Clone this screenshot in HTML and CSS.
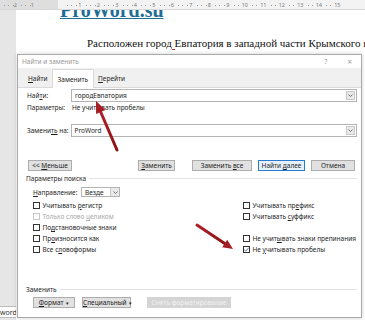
FILE: index.html
```html
<!DOCTYPE html>
<html>

<head>
    <title>Найти и заменить</title>
    <link rel="stylesheet" href="styles.css">
</head>

<body>
    <div class="ruler">
        <div class="ruler-margin">
            <span class="tick"><b>2</b></span><span class="tick"><b>1</b></span>
        </div>
        <div class="ruler-text">
            <span class="tick"><b>1</b></span><span class="tick"><b>2</b></span><span class="tick"><b>3</b></span><span class="tick"><b>4</b></span><span class="tick"><b>5</b></span><span class="tick"><b>6</b></span><span class="tick"><b>7</b></span><span class="tick"><b>8</b></span><span class="tick"><b>9</b></span><span class="tick"><b>10</b></span><span class="tick"><b>11</b></span><span class="tick"><b>12</b></span><span class="tick"><b>13</b></span><span class="tick"><b>14</b></span><span class="tick"><b>15</b></span>
        </div>
    </div>

    <div class="doc">
        <div class="gutter">
            <div class="hint">word</div>
        </div>
        <div class="page">
            <div class="site">ProWord.su</div>
            <p class="line">Расположен город<span class="mark"> </span>Евпатория в западной части Крымского полуострова</p>
        </div>
    </div>

    <div class="dialog">
        <div class="titlebar">
            <span class="title">Найти и заменить</span>
            <span class="help">?</span>
            <span class="close">×</span>
        </div>
        <div class="tabs">
            <span class="tab"><u>Н</u>айти</span>
            <span class="tab active">Заменить</span>
            <span class="tab"><u>П</u>ерейти</span>
        </div>
        <div class="panel">
            <div class="field">
                <span class="label">Най<u>т</u>и:</span>
                <div class="combo">
                    <span class="value">городЕвпатория</span>
                    <span class="drop"><svg width="5" height="3" viewBox="0 0 5 3"><path d="M0.5 0.5 L2.5 2.5 L4.5 0.5" fill="none" stroke="#555" stroke-width="0.8"/></svg></span>
                </div>
            </div>
            <div class="params">
                <span class="label">Параметры:</span>
                <span>Не учитывать пробелы</span>
            </div>
            <div class="field replace">
                <span class="label">Замени<u>ть</u> на:</span>
                <div class="combo">
                    <span class="value">ProWord</span>
                    <span class="drop"><svg width="5" height="3" viewBox="0 0 5 3"><path d="M0.5 0.5 L2.5 2.5 L4.5 0.5" fill="none" stroke="#555" stroke-width="0.8"/></svg></span>
                </div>
            </div>

            <div class="buttons">
                <span class="btn btn-less">&lt;&lt; <u>М</u>еньше</span>
                <span class="btn btn-replace"><u>З</u>аменить</span>
                <span class="btn btn-all">Заменить <u>в</u>се</span>
                <span class="btn btn-next">Найти <u>д</u>алее</span>
                <span class="btn btn-cancel">Отмена</span>
            </div>

            <div class="group">Параметры поиска</div>
            <div class="direction">
                <span class="label"><u>Н</u>аправление:</span>
                <span class="select">
                    <span class="value">Везде</span>
                    <span class="drop"><svg width="5" height="3" viewBox="0 0 5 3"><path d="M0.5 0.5 L2.5 2.5 L4.5 0.5" fill="none" stroke="#555" stroke-width="0.8"/></svg></span>
                </span>
            </div>

            <div class="checks">
                <label class="check"><i class="box"></i><span>Учитывать <u>р</u>егистр</span></label>
                <label class="check"><i class="box"></i><span>Учитывать пр<u>е</u>фикс</span></label>
                <label class="check disabled"><i class="box"></i><span>Только слово <u>ц</u>еликом</span></label>
                <label class="check"><i class="box"></i><span>Учитывать <u>с</u>уффикс</span></label>
                <label class="check"><i class="box"></i><span>По<u>д</u>становочные знаки</span></label>
                <span></span>
                <label class="check"><i class="box"></i><span>Пр<u>о</u>износится как</span></label>
                <label class="check"><i class="box"></i><span>Не учит<u>ы</u>вать знаки препинания</span></label>
                <label class="check"><i class="box"></i><span>Все с<u>л</u>овоформы</span></label>
                <label class="check"><i class="box"><svg width="7" height="7" viewBox="0 0 7 7"><path d="M1.2 3.6 L2.8 5.1 L5.8 1.6" fill="none" stroke="#3d6fa3" stroke-width="0.9"/></svg></i><span>Не <u>у</u>читывать пробелы</span></label>
            </div>

            <div class="group group-replace">Заменить</div>
            <div class="buttons buttons-format">
                <span class="btn btn-format"><u>Ф</u>ормат <span class="caret">▾</span></span>
                <span class="btn btn-special"><u>С</u>пециальный <span class="caret">▾</span></span>
                <span class="btn btn-clear">Снять форматирование</span>
            </div>
        </div>
    </div>

    <svg class="arrows" width="365" height="320" viewBox="0 0 365 320">
        <defs>
            <linearGradient id="red" x1="0" y1="0" x2="1" y2="1">
                <stop offset="0" stop-color="#b0202a"/>
                <stop offset="1" stop-color="#8a1414"/>
            </linearGradient>
        </defs>
        <line x1="117" y1="150" x2="100.7" y2="112" stroke="url(#red)" stroke-width="3" stroke-linecap="round"/>
        <polygon points="96,101 105.3,110.1 96.1,114" fill="#a51c22"/>
        <line x1="197" y1="225" x2="224.7" y2="243.5" stroke="url(#red)" stroke-width="3" stroke-linecap="round"/>
        <polygon points="233,249 222.2,247.2 227.2,239.8" fill="#a51c22"/>
    </svg>
</body>

</html>
```

FILE: styles.css
```css
* {
    margin: 0;
    padding: 0;
    box-sizing: border-box;
}

body {
    width: 365px;
    height: 320px;
    overflow: hidden;
    position: relative;
    background: #e6e6e6;
    font-family: "Noto Sans", "Liberation Sans", sans-serif;
    font-size: 6.5px;
    color: #1e1e1e;
}

u {
    text-decoration-thickness: 0.5px;
    text-underline-offset: 1px;
}

/* ruler */
.ruler {
    height: 10px;
    display: flex;
    background: #f3f3f3;
    border-bottom: 1px solid #d8d8d8;
    font-size: 5.5px;
    line-height: 10px;
    color: #7a7a7a;
}

.ruler-margin {
    width: 58px;
    display: flex;
    background: #dedede;
}

.ruler-text {
    flex: 1;
    display: flex;
    padding-left: 5px;
}

.tick {
    flex: none;
    width: 18.5px;
    text-align: right;
    background-image: repeating-linear-gradient(90deg, transparent 0 3.6px, #9c9c9c 3.6px 4.6px);
    background-size: 100% 1px;
    background-position: 0 5px;
    background-repeat: no-repeat;
}

.ruler-margin .tick {
    width: 17px;
}

.tick b {
    font-weight: normal;
    background: #f3f3f3;
}

.ruler-margin .tick b {
    background: #dedede;
}

/* document */
.doc {
    height: 310px;
    display: flex;
    overflow: hidden;
}

.gutter {
    width: 16px;
    display: flex;
    flex-direction: column;
}

.hint {
    margin-top: auto;
    margin-bottom: 2px;
    width: 18px;
    height: 12px;
    line-height: 11px;
    padding-right: 1px;
    text-align: right;
    overflow: hidden;
    background: #fff;
    border: 1px solid #bdbdbd;
    border-left: none;
    font-size: 7px;
    color: #333;
}

.page {
    flex: 1;
    background: #fff;
    overflow: hidden;
}

.site {
    margin: -10px 0 0 44px;
    font-family: "Liberation Serif", serif;
    font-size: 20px;
    line-height: 20px;
    font-weight: bold;
    color: #1f6d94;
    text-decoration: underline;
    text-decoration-thickness: 1px;
}

.line {
    margin: 16px 0 0 71px;
    font-family: "Liberation Serif", serif;
    font-size: 11px;
    line-height: 14px;
    white-space: nowrap;
    color: #111;
}

.mark {
    border-bottom: 1.5px solid #c0282b;
}

/* dialog */
.dialog {
    position: absolute;
    left: 17px;
    top: 54px;
    width: 345px;
    height: 264px;
    background: #fff;
    border: 1px solid #a9a9a9;
    box-shadow: 0 0 4px rgba(0, 0, 0, 0.2);
    display: flex;
    flex-direction: column;
}

.titlebar {
    height: 13px;
    display: flex;
    align-items: center;
    padding: 0 9px 0 4px;
    color: #9a9a9a;
}

.titlebar .title {
    flex: 1;
}

.titlebar .help {
    margin-right: 20px;
}

.titlebar .close {
    font-size: 8px;
}

.tabs {
    height: 20px;
    display: flex;
    align-items: flex-end;
    padding-left: 6px;
    background: #f0f0f0;
    border-bottom: 1px solid #dadada;
}

.tab {
    height: 15px;
    line-height: 14px;
    padding: 0 4px;
}

.tab.active {
    height: 19px;
    line-height: 19px;
    margin-bottom: -1px;
    padding: 0 5px;
    background: #fff;
    border: 1px solid #dadada;
    border-bottom: none;
}

.panel {
    flex: 1;
    display: flex;
    flex-direction: column;
    padding: 0 4px 0 9px;
}

.label {
    white-space: nowrap;
}

.field {
    height: 13px;
    margin-top: 1px;
    display: flex;
    align-items: center;
}

.field .label {
    width: 44px;
}

.field.replace {
    margin-top: 12px;
}

.field.replace .label {
    width: auto;
    margin-right: 2px;
}

.combo {
    flex: 1;
    height: 13px;
    display: flex;
    align-items: center;
    padding-left: 3px;
    border: 1px solid #b4b4b4;
}

.combo .value,
.select .value {
    flex: 1;
}

.drop {
    width: 9px;
    height: 9px;
    margin-right: 1px;
    display: flex;
    align-items: center;
    justify-content: center;
    background: #e9e9e9;
    border: 1px solid #c9c9c9;
}

.params {
    height: 10px;
    display: flex;
    align-items: center;
}

.params .label {
    width: 45px;
}

/* buttons */
.buttons {
    height: 11px;
    margin-top: 23px;
    display: flex;
    padding: 0 2px 0 1px;
}

.btn {
    display: block;
    height: 11px;
    line-height: 9px;
    text-align: center;
    background: #e1e1e1;
    border: 1px solid #adadad;
    white-space: nowrap;
}

.btn-less {
    width: 44px;
}

.btn-replace {
    width: 37px;
    margin-left: auto;
}

.btn-all {
    width: 60px;
    margin-left: 17px;
}

.btn-next {
    width: 47px;
    margin-left: 6px;
    background: #e5f1fb;
    border-color: #2a7ad2;
}

.btn-cancel {
    width: 44px;
    margin-left: 6px;
}

.group {
    height: 10px;
    margin: 2px 0 0 -1px;
    display: flex;
    align-items: center;
}

.group::after {
    content: "";
    flex: 1;
    margin-left: 3px;
    border-top: 1px solid #e2e2e2;
}

.direction {
    height: 10px;
    margin-top: 4px;
    padding-left: 6px;
    display: flex;
    align-items: center;
}

.direction .label {
    width: 48px;
}

.select {
    width: 39px;
    height: 10px;
    display: flex;
    align-items: center;
    padding-left: 3px;
    border: 1px solid #b4b4b4;
}

.select .drop {
    height: 8px;
    margin-right: 0;
    border-width: 0 0 0 1px;
}

/* checkboxes */
.checks {
    margin-top: 3px;
    padding-left: 6px;
    display: grid;
    grid-template-columns: 210px 1fr;
    grid-auto-rows: 11px;
}

.check {
    display: flex;
    align-items: center;
    white-space: nowrap;
}

.box {
    width: 7px;
    height: 7px;
    margin-right: 2.5px;
    border: 1px solid #333;
    background: #fff;
    display: flex;
}

.box svg {
    margin: -1px;
}

.check.disabled {
    color: #a8a8a8;
}

.check.disabled .box {
    border-color: #c8c8c8;
}

.group-replace {
    margin-top: 29px;
}

.buttons-format {
    margin-top: 3px;
    padding-left: 6px;
}

.btn-format {
    width: 42px;
}

.btn-special {
    width: 49px;
    margin-left: 7px;
}

.btn-clear {
    width: 84px;
    margin-left: 16px;
    background: #d4d4d4;
    border-color: #d4d4d4;
    color: #f2f2f2;
}

.caret {
    margin-left: 1px;
    font-size: 5px;
}

.arrows {
    position: absolute;
    left: 0;
    top: 0;
    pointer-events: none;
}
```
